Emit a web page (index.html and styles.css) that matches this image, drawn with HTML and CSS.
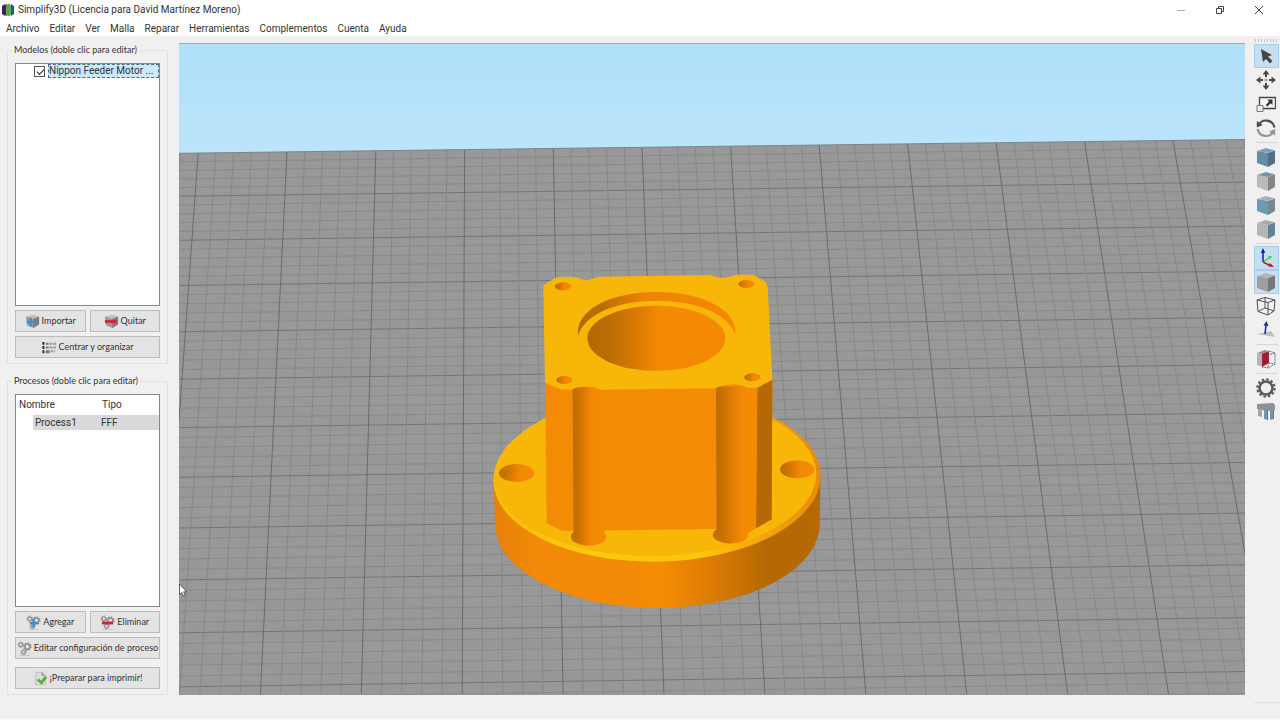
FILE: index.html
```html
<!DOCTYPE html>
<html lang="es">
<head>
<meta charset="utf-8">
<title>Simplify3D (Licencia para David Martínez Moreno)</title>
<link rel="stylesheet" href="styles.css">
</head>
<body>
<svg class="defs" width="0" height="0" aria-hidden="true">
  <defs>
    <g id="gear">
      <circle r="2.8" fill="none" stroke="#8d8d90" stroke-width="1.8"/>
      <circle r="4" fill="none" stroke="#8d8d90" stroke-width="1.4" stroke-dasharray="1.5 1.64"/>
    </g>
    <g id="gears">
      <use href="#gear" transform="translate(4 4) scale(.75)"/>
      <use href="#gear" transform="translate(11 6)"/>
      <use href="#gear" transform="translate(7 12) scale(.7)"/>
      <path d="M3 15.500h11" stroke="#c4c4c4"/>
    </g>
    <g id="block">
      <path d="M1 3 9 1l6 2v8l-6 4-7-3z" fill="#9a9a9a"/>
      <path d="M1 3 9 1l6 2-6 2z" fill="#c3c3c3"/>
      <path d="M9 5l6-2v8l-6 4z" fill="#7c7c7c"/>
    </g>
  </defs>
</svg>

<header class="titlebar">
  <svg class="logo" viewBox="0 0 14 14" aria-hidden="true">
    <path d="M1 3 4 1v12l-3-2z" fill="#4b1c50"/>
    <path d="M4 2l2-1v12l-2-1z" fill="#243c34"/>
    <path d="M5 2.500l3-2 2 2v9l-2 2-3-2z" fill="#55ad55"/>
    <path d="M10 1l3 2v8l-3 2z" fill="#245b70"/>
  </svg>
  <h1 class="title">Simplify3D (Licencia para David Martínez Moreno)</h1>
  <div class="window-controls">
    <button class="win" aria-label="Minimizar"><svg viewBox="0 0 10 10"><path d="M1 5.500h8" stroke="#aaa"/></svg></button>
    <button class="win" aria-label="Restaurar"><svg viewBox="0 0 10 10"><path d="M1.500 3.500h5v5h-5zM3.500 3V1.500h5v5H7" fill="none" stroke="#444"/></svg></button>
    <button class="win" aria-label="Cerrar"><svg viewBox="0 0 10 10"><path d="M1 1l8 8M9 1l-8 8" stroke="#444"/></svg></button>
  </div>
</header>

<nav class="menubar">
  <button>Archivo</button><button>Editar</button><button>Ver</button><button>Malla</button><button>Reparar</button><button>Herramientas</button><button>Complementos</button><button>Cuenta</button><button>Ayuda</button>
</nav>

<main class="workspace">
  <aside class="sidebar">
    <fieldset class="group">
      <legend>Modelos (doble clic para editar)</legend>
      <div class="list">
        <div class="model">
          <input type="checkbox" id="model1" checked>
          <label for="model1">Nippon Feeder Motor ...</label>
        </div>
      </div>
      <div class="pair">
        <button class="btn"><svg viewBox="0 0 16 16"><use href="#block"/><path d="M6 4v9M2 8.500h9" stroke="#3d8fd0" stroke-width="2.500"/></svg>Importar</button>
        <button class="btn"><svg viewBox="0 0 16 16"><use href="#block"/><path d="M1 8h12" stroke="#d3213a" stroke-width="3"/></svg>Quitar</button>
      </div>
      <button class="btn"><svg viewBox="0 0 16 16"><path d="M1.500 2v12" stroke="#222" stroke-dasharray="3 1.500" stroke-width="2"/><path d="M4 3h3v2H4zM4 7h3v2H4zM4 11h4v3H4z" fill="#777"/><path d="M8 4h7M8 8h8M9 12h5" stroke="#999" stroke-width="2" stroke-dasharray="3 1"/></svg>Centrar y organizar</button>
    </fieldset>

    <fieldset class="group">
      <legend>Procesos (doble clic para editar)</legend>
      <div class="list">
        <table class="processes">
          <thead><tr><th>Nombre</th><th>Tipo</th></tr></thead>
          <tbody><tr><td><span>Process1</span></td><td class="type">FFF</td></tr></tbody>
        </table>
      </div>
      <div class="pair">
        <button class="btn"><svg viewBox="0 0 16 16"><use href="#gears"/><path d="M8 4v9M4 8.500h9" stroke="#3d8fd0" stroke-width="2.500"/></svg>Agregar</button>
        <button class="btn"><svg viewBox="0 0 16 16"><use href="#gears"/><path d="M2 8.500h12" stroke="#d3213a" stroke-width="3"/></svg>Eliminar</button>
      </div>
      <button class="btn"><svg viewBox="0 0 16 16"><use href="#gears"/></svg>Editar configuración de proceso</button>
      <button class="btn print"><svg viewBox="0 0 16 16"><path d="M3.500 1.500h7l3 3v10h-11z" fill="#ddd" stroke="#bbb"/><path d="M9 1v4h4" fill="#999"/><path d="M5 9l4 3.500L14 6" fill="none" stroke="#58b32a" stroke-width="3"/></svg>¡Preparar para imprimir!</button>
    </fieldset>
  </aside>

  <section class="viewport" aria-label="Vista 3D">
    <svg class="scene" viewBox="179 44 1066 651" preserveAspectRatio="xMidYMid slice">
      <defs>
        <linearGradient id="sky" x1="0" y1="0" x2="0" y2="1"><stop offset="0" stop-color="#b0e0fa"/><stop offset="1" stop-color="#bce5fc"/></linearGradient>
        <linearGradient id="side"><stop offset="0" stop-color="#e68008"/><stop offset=".12" stop-color="#f28908"/><stop offset=".53" stop-color="#f48b05"/><stop offset=".68" stop-color="#d97a05"/><stop offset=".84" stop-color="#b56804"/><stop offset="1" stop-color="#b56a04"/></linearGradient>
        <linearGradient id="rim"><stop offset="0" stop-color="#f9c00c"/><stop offset=".25" stop-color="#ffc70a"/><stop offset=".62" stop-color="#ffc70a"/><stop offset=".82" stop-color="#f7a40c"/><stop offset="1" stop-color="#e88a0a"/></linearGradient>
        <linearGradient id="bore"><stop offset="0" stop-color="#b46804"/><stop offset=".15" stop-color="#bb6c04"/><stop offset=".36" stop-color="#d97a04"/><stop offset=".52" stop-color="#f48904"/><stop offset="1" stop-color="#f48904"/></linearGradient>
        <linearGradient id="ledge"><stop offset="0" stop-color="#b46804"/><stop offset=".15" stop-color="#bb6c04"/><stop offset=".42" stop-color="#ec8404"/><stop offset="1" stop-color="#f48904"/></linearGradient>
        <linearGradient id="groove"><stop offset="0" stop-color="#b96b04"/><stop offset=".3" stop-color="#d57804"/><stop offset=".6" stop-color="#f38804"/><stop offset="1" stop-color="#f48b04"/></linearGradient>
        <clipPath id="bed"><path d="M179 153.300 1245 139.500V695H179z"/></clipPath>
      </defs>
      <path d="M179 44h1066v112H179z" fill="url(#sky)"/>
      <path d="M179 153.300 1245 139.500V695H179z" fill="#989898"/>
      <g id="grid" clip-path="url(#bed)"></g>
      <path d="M179 153.300 1245 139.500" stroke="#7d8589"/>
      <g transform="translate(480 260) scale(.33333)">
        <path d="M41 654 45 802A487 252 0 0 0 1019 782L1022 640z" fill="url(#side)"/>
        <ellipse cx="531" cy="654" rx="491" ry="251" fill="url(#rim)" transform="rotate(-1 531 654)"/>
        <ellipse cx="526" cy="648" rx="483" ry="240" fill="#f8b708" transform="rotate(-1 526 648)"/>
        <ellipse cx="110" cy="639" rx="53" ry="27" fill="url(#groove)"/>
        <ellipse cx="952" cy="628" rx="52" ry="27" fill="url(#groove)"/>
        <ellipse cx="326" cy="830" rx="53" ry="27" fill="url(#groove)"/>
        <ellipse cx="752" cy="824" rx="53" ry="27" fill="url(#groove)"/>
        <path d="M195 360 200 790 248 813 705 807 828 805 875 778 877 350z" fill="#f48b05"/>
        <path d="M832 375 828 805 875 778 877 350z" fill="#b56804"/>
        <path d="M278 380 281 830Q300 856 330 856Q358 854 372 835V380z" fill="url(#groove)"/>
        <path d="M708 380 710 815Q725 850 752 850Q790 848 800 822L828 805 832 380z" fill="url(#groove)"/>
        <path d="M190 76 225 54Q258 47 295 53Q312 63 335 57L355 50 690 45Q720 57 745 51L768 44H820L857 65 863 80 877 360 832 383 800 383Q785 372 755 374 725 373 706 385L360 389Q350 380 318 380 288 380 275 390L242 388 195 368z" fill="#f8b708"/>
        <path d="M294 228C285 150 390 96 530 96C670 96 775 150 766 225C748 165 655 122 530 122C405 122 312 165 294 228z" fill="url(#ledge)"/>
        <ellipse cx="529" cy="235" rx="207" ry="98" fill="url(#bore)"/>
        <ellipse cx="249" cy="79" rx="24" ry="12" fill="url(#groove)"/>
        <ellipse cx="799" cy="72" rx="24" ry="12" fill="url(#groove)"/>
        <ellipse cx="253" cy="360" rx="24" ry="12" fill="url(#groove)"/>
        <ellipse cx="817" cy="352" rx="24" ry="12" fill="url(#groove)"/>
      </g>
      <path d="M179.500 584v10.500l2.300-2 1.500 3.500 1.800-.8-1.500-3.400h3z" fill="#fff" stroke="#333" stroke-width=".7"/>
    </svg>
  </section>

  <div class="toolbar" role="toolbar" aria-label="Herramientas de vista">
    <div class="handle"></div>
    <button class="tool active" aria-label="Seleccionar"><svg viewBox="0 0 20 20"><path d="M5 3l11 6-4 1.500 4.500 4.500-2.500 2.500-4-4.500L7 16z" fill="#454545"/></svg></button>
    <button class="tool" aria-label="Mover"><svg viewBox="0 0 20 20"><path d="M10 0l3.500 4.500H11V7H9V4.500H6.500zM10 20l3.500-4.500H11V13H9v2.500H6.500zM0 10l4.500-3.500V9H7v2H4.500v2.500zM20 10l-4.500-3.500V9H13v2h2.500v2.500z" fill="#484848"/><path d="M8.500 8.500h3v3h-3z" fill="#aaa"/></svg></button>
    <button class="tool" aria-label="Escalar"><svg viewBox="0 0 20 20"><path d="M3.500 3.500h16v11h-16z" fill="#f4f4f4" stroke="#444" stroke-width="1.300"/><path d="M1 11.500h6v6H1z" fill="#eee" stroke="#777"/><path d="M16.500 5.500v5.500l-1.800-1.800-3.400 3.300-1.500-1.500 3.300-3.400-1.800-1.900z" fill="#333"/></svg></button>
    <button class="tool" aria-label="Rotar"><svg viewBox="0 0 20 20"><path d="M2.500 7.500A8.300 8.300 0 0 1 18.300 9.500" fill="none" stroke="#4c4c4c" stroke-width="2.200"/><path d="M.8 3v6.500l6-2.500z" fill="#4c4c4c"/><path d="M17.500 13A8.300 8.300 0 0 1 1.700 11" fill="none" stroke="#969696" stroke-width="2.200"/><path d="M19.200 17.500V11l-6 2.500z" fill="#969696"/></svg></button>
    <hr>
    <button class="tool" aria-label="Vista predeterminada"><svg viewBox="0 0 20 20"><path d="M1 4l11 2v14L1 16z" fill="#648ca8"/><path d="M12 6l7-2.500V16l-7 4z" fill="#4d7087"/><path d="M1 4l9-3 9 2.500L12 6z" fill="#7ba2bc"/></svg></button>
    <button class="tool" aria-label="Vista superior"><svg viewBox="0 0 20 20"><path d="M1 4l11 2v14L1 16z" fill="#bababa"/><path d="M12 6l7-2.500V16l-7 4z" fill="#858585"/><path d="M1 4l9-3 9 2.500L12 6z" fill="#7095ae"/></svg></button>
    <button class="tool" aria-label="Vista frontal"><svg viewBox="0 0 20 20"><path d="M1 4l11 2v14L1 16z" fill="#6c99b3"/><path d="M12 6l7-2.500V16l-7 4z" fill="#7e8589"/><path d="M1 4l9-3 9 2.500L12 6z" fill="#aaafb2"/></svg></button>
    <button class="tool" aria-label="Vista lateral"><svg viewBox="0 0 20 20"><path d="M1 4l11 2v14L1 16z" fill="#b5b5b5"/><path d="M12 6l7-2.500V16l-7 4z" fill="#648298"/><path d="M1 4l9-3 9 2.500L12 6z" fill="#a9a9a9"/></svg></button>
    <hr>
    <button class="tool active" aria-label="Mostrar ejes"><svg viewBox="0 0 20 20"><path d="M7 14V4" stroke="#1717a8" stroke-width="1.500"/><path d="M7 0l2.200 5H4.800z" fill="#1717a8"/><path d="M7 14l6-4" stroke="#32cc58" stroke-width="1.300"/><path d="M16 8l-4 .2 2 3z" fill="#32cc58"/><path d="M7 14l6 3" stroke="#b5172a" stroke-width="1.500"/><path d="M18 19l-6-.5 2-3.500z" fill="#b5172a"/></svg></button>
    <button class="tool active" aria-label="Modelo sólido"><svg viewBox="0 0 20 20"><path d="M1 4l11 2v14L1 16z" fill="#9e9e9e"/><path d="M12 6l7-2.500V16l-7 4z" fill="#777"/><path d="M1 4l9-3 9 2.500L12 6z" fill="#b4b4b4"/></svg></button>
    <button class="tool" aria-label="Modelo de alambre"><svg viewBox="0 0 20 20"><path d="M1 4l11 2.500V19L2 15.500zM12 6.500 19 4l-1 11-6 4M1 4l8-2.500L19 4M9 1.500V12l-7 3.500M9 12l9 3" fill="none" stroke="#505050"/></svg></button>
    <button class="tool" aria-label="Mostrar normales"><svg viewBox="0 0 20 20"><path d="M1 14l14-3 4 6z" fill="#bfbfbf"/><path d="M9 14l1-9" stroke="#2626ad" stroke-width="1.600"/><path d="M10.500 1l2 5-5-.5z" fill="#2626ad"/></svg></button>
    <hr>
    <button class="tool" aria-label="Sección transversal"><svg viewBox="0 0 20 20"><path d="M1 4l6 1v13l-6-2z" fill="#b5b5b5"/><path d="M1 4l8-3 3 1-5 3z" fill="#8d8d8d"/><path d="M6 5l7-3v12l-7 4z" fill="#a51b30"/><path d="M13 2l6 2v11l-7 4-6-1M12 6l7-2M12 6v13M13 14l6 1" fill="none" stroke="#555" stroke-dasharray="1.500 1"/></svg></button>
    <hr>
    <button class="tool" aria-label="Configuración"><svg viewBox="0 0 20 20"><circle cx="10" cy="10" r="6.500" fill="none" stroke="#5b5b5b" stroke-width="2.600"/><circle cx="10" cy="10" r="8.600" fill="none" stroke="#5b5b5b" stroke-width="2.200" stroke-dasharray="2.500 2"/></svg></button>
    <button class="tool" aria-label="Soportes"><svg viewBox="0 0 20 20"><path d="M1 2l16-1 2 2v5l-7 1-11-2z" fill="#8d9296"/><path d="M2 7h4v8l-4-1z" fill="#a6a6a6"/><path d="M8 8h4v10l-4-1zM14 8h4v9l-4 1z" fill="#7697a9"/><path d="M11 8h1v10h-1zM17 8h1v9h-1z" fill="#55788c"/></svg></button>
  </div>
</main>
<script src="scene.js"></script>
</body>
</html>
```

FILE: styles.css
```css
* { box-sizing: border-box; }

body {
  margin: 0;
  min-height: 100vh;
  display: flex;
  flex-direction: column;
  border-bottom: 1px solid #f8f8f8;
  background: #f0f0f0;
  color: #333;
  font: 10px/14px Roboto, "Liberation Sans", sans-serif;
}

button {
  margin: 0;
  padding: 0;
  border: 0;
  background: none;
  color: inherit;
  font: inherit;
}

.defs { position: absolute; }

.titlebar {
  display: flex;
  align-items: center;
  height: 19px;
  padding: 0 2px 0 1px;
  background: #fff;
}
.logo { width: 14px; height: 14px; margin-right: 3px; }
.title { flex: 1; margin: 0; font-size: 10px; font-weight: 400; }
.window-controls { display: flex; }
.win { display: grid; place-items: center; width: 39px; height: 19px; }
.win svg { width: 10px; height: 10px; }

.menubar {
  display: flex;
  gap: 10px;
  height: 17px;
  padding: 2px 6px 0;
  background: #fff;
  line-height: 14px;
}

.workspace {
  flex: 1;
  display: grid;
  grid-template-columns: 161px 1fr 26px;
  padding: 0 0 24px 7px;
}

.sidebar {
  display: flex;
  flex-direction: column;
  gap: 11px;
  padding-top: 8px;
}
.group {
  flex: 1;
  display: flex;
  flex-direction: column;
  gap: 4px;
  min-width: 0;
  margin: 0;
  padding: 7px 7px 5px;
  border: 1px solid #e2e2e2;
  font: 9px/12px Lato, "Liberation Sans", sans-serif;
}
.group legend { margin-left: -3px; padding: 0 2px; }
.list {
  flex: 1;
  border: 1px solid #828790;
  background: #fff;
  font: 10px/14px Roboto, "Liberation Sans", sans-serif;
}
.model { display: flex; align-items: center; padding-left: 18px; }
.model input {
  appearance: none;
  width: 11px;
  height: 11px;
  margin: 0 3px 0 0;
  border: 1px solid #555;
  background: #fff;
}
.model input:checked::before {
  content: "";
  display: block;
  width: 6px;
  height: 3px;
  margin: 2px 0 0 2px;
  border: solid #222;
  border-width: 0 0 1px 1px;
  transform: rotate(-45deg);
}
.model label {
  flex: 1;
  border: 1px dashed #4d6c80;
  background: #cce8fa;
  line-height: 12px;
  white-space: nowrap;
}
.processes { width: 100%; border-collapse: collapse; table-layout: fixed; }
.processes th, .processes td { padding: 0; text-align: left; font-weight: 400; }
.processes th { height: 20px; padding-left: 3px; }
.processes th:first-child { width: 83px; }
.processes td { line-height: 15px; }
.processes td span { display: block; margin-left: 17px; padding-left: 2px; background: #d9d9d9; }
.processes .type { padding-left: 2px; background: #d9d9d9; }

.pair { display: grid; grid-template-columns: 1fr 1fr; gap: 4px; }
.btn {
  display: flex;
  align-items: center;
  justify-content: center;
  gap: 2px;
  height: 22px;
  border: 1px solid #bcbcbc;
  background: #e3e3e3;
  white-space: nowrap;
}
.btn svg { flex: none; width: 15px; height: 15px; }
.print { margin-top: 4px; }

.viewport {
  display: flex;
  margin: 7px 9px 0 11px;
  border-top: 1px solid #9aa9b2;
}
.scene { flex: 1; width: 0; min-width: 100%; height: 100%; }

.toolbar {
  display: flex;
  flex-direction: column;
  margin-bottom: -8px;
  padding-top: 3px;
  border-bottom: 1px solid #dedede;
}
.handle {
  height: 3px;
  margin: 0 1px 2px;
  background: repeating-linear-gradient(90deg, #c2c2c2 0 1px, transparent 1px 3px);
}
.tool {
  display: grid;
  place-items: center;
  height: 24px;
  margin-right: 1px;
  padding-right: 1px;
}
.tool svg { width: 20px; height: 20px; }
.tool.active { border: 1px solid #a3cfec; background: #c5dff0; }
.toolbar hr { width: 22px; height: 1px; margin: 2px auto; border: 0; background: #d6d6d6; }
```

FILE: scene.js
```js
// Draws the perspective grid of the print bed: each fifth line is a major one.
const grid = document.getElementById("grid");

function addLine(x1, y1, x2, y2, color) {
  const line = document.createElementNS("http://www.w3.org/2000/svg", "line");
  line.setAttribute("x1", x1);
  line.setAttribute("y1", y1);
  line.setAttribute("x2", x2);
  line.setAttribute("y2", y2);
  line.setAttribute("stroke", color);
  grid.appendChild(line);
}

for (let i = 1; i <= 60; i++) {
  const k = i / 5;
  const left = 153.3 + 42.4 * k + 0.555 * k * k;
  addLine(179, left, 1245, left - 14 - 0.12 * k, i % 5 === 0 ? "#767676" : "#8a8a8a");
}
for (let i = -2; i <= 62; i++) {
  const k = i / 5;
  addLine(199.8 + 88.3 * k, 130, 159.5 + 100.9 * k, 694, i % 5 === 0 ? "#6b6b6b" : "#878787");
}
```
